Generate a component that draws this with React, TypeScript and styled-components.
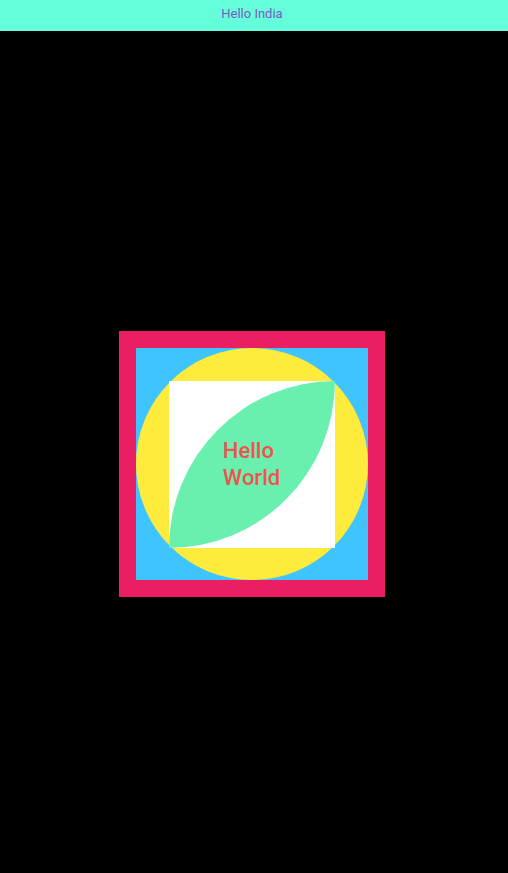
import React from "react";
import styled, { createGlobalStyle } from "styled-components";

const Global = createGlobalStyle`
  html, body { margin: 0; padding: 0; background: #000; }
  body { font-family: Roboto, "Noto Sans", sans-serif; }
`;

const Page = styled.div`
  width: 508px;
  height: 873px;
  background: #000;
  display: flex;
  flex-direction: column;
`;

const Header = styled.header`
  height: 31px;
  box-sizing: border-box;
  padding: 6px 4px 0 0;
  background: #64ffda;
  text-align: center;
  font-size: 13px;
  line-height: 15px;
  color: #7e57c2;
`;

const Main = styled.main`
  flex: 1;
  display: flex;
  justify-content: center;
  align-items: flex-start;
  padding: 300px 4px 0 0;
`;

const Frame = styled.div`
  width: 266px;
  height: 266px;
  box-sizing: border-box;
  border: 17px solid #e91e63;
  background: #40c4ff;
  display: flex;
`;

const Circle = styled.div`
  flex: 1;
  border-radius: 50%;
  background: #ffeb3b;
  display: flex;
  align-items: center;
  justify-content: center;
`;

const Square = styled.div`
  width: 166px;
  height: 167px;
  background: #fff;
  display: flex;
`;

const Leaf = styled.div`
  flex: 1;
  background: #69f0ae;
  border-top-left-radius: 100%;
  border-bottom-right-radius: 100%;
  display: flex;
  align-items: center;
  justify-content: center;
`;

const Label = styled.span`
  width: min-content;
  font-size: 22px;
  font-weight: 500;
  line-height: 27px;
  color: #ef5350;
  text-align: left;
  margin-right: 1px;
`;

export default function App() {
  return (
    <>
      <Global />
      <Page>
        <Header>Hello India</Header>
        <Main>
          <Frame>
            <Circle>
              <Square>
                <Leaf>
                  <Label>Hello World</Label>
                </Leaf>
              </Square>
            </Circle>
          </Frame>
        </Main>
      </Page>
    </>
  );
}
